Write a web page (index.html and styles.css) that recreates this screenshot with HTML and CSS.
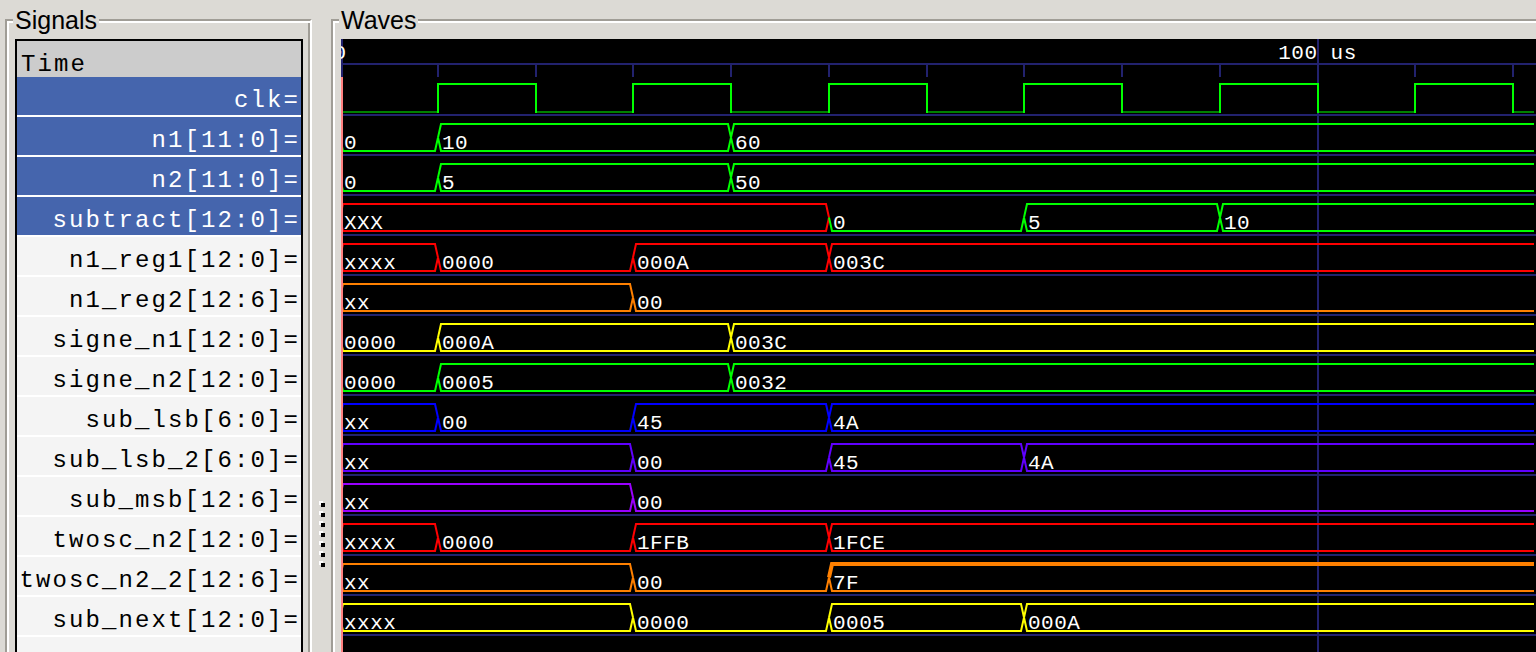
FILE: index.html
```html
<!DOCTYPE html>
<html>
<head>
<meta charset="utf-8">
<title>Waves</title>
<link rel="stylesheet" href="styles.css">
</head>
<body>
<div class="app">
  <div class="frame signals">
    <span class="frame-label">Signals</span>
    <div class="listbox">
      <div class="list-head">Time</div>
      <div class="row sel"><span class="nm">clk=</span></div>
      <div class="row sel"><span class="nm">n1[11:0]=</span></div>
      <div class="row sel"><span class="nm">n2[11:0]=</span></div>
      <div class="row sel"><span class="nm">subtract[12:0]=</span></div>
      <div class="row"><span class="nm">n1_reg1[12:0]=</span></div>
      <div class="row"><span class="nm">n1_reg2[12:6]=</span></div>
      <div class="row"><span class="nm">signe_n1[12:0]=</span></div>
      <div class="row"><span class="nm">signe_n2[12:0]=</span></div>
      <div class="row"><span class="nm">sub_lsb[6:0]=</span></div>
      <div class="row"><span class="nm">sub_lsb_2[6:0]=</span></div>
      <div class="row"><span class="nm">sub_msb[12:6]=</span></div>
      <div class="row"><span class="nm">twosc_n2[12:0]=</span></div>
      <div class="row"><span class="nm">twosc_n2_2[12:6]=</span></div>
      <div class="row"><span class="nm">sub_next[12:0]=</span></div>
    </div>
  </div>
  <div class="handle">
    <i class="dot"></i><i class="dot"></i><i class="dot"></i><i class="dot"></i><i class="dot"></i><i class="dot"></i><i class="dot"></i>
  </div>
  <div class="frame waves">
    <span class="frame-label">Waves</span>
    <div class="canvas">
      <svg id="wave" class="wave-svg" xmlns="http://www.w3.org/2000/svg" width="1195" height="613" viewBox="341 39 1195 613"></svg>
    </div>
  </div>
</div>
<script src="script.js"></script>
</body>
</html>
```

FILE: styles.css
```css
html, body {
  margin: 0;
  padding: 0;
}
body {
  background: #dcdad5;
  width: 1536px;
  height: 652px;
  overflow: hidden;
  font-family: "Liberation Sans", Arial, sans-serif;
}
.app {
  display: flex;
  align-items: flex-start;
  height: 652px;
  overflow: hidden;
}
.frame {
  position: relative;
  flex: none;
  margin-top: 19px;
  height: 633px;
  box-sizing: border-box;
  border: 2px solid;
  border-bottom: 0;
  border-color: #a09d96 #ffffff #ffffff #a09d96;
  box-shadow: inset 2px 2px 0 #ffffff, inset -2px 0 0 #a09d96;
}
.signals {
  margin-left: 5px;
  width: 307px;
  padding: 18px 7px 0 8px;
}
.waves {
  width: 1205px;
  padding: 18px 0 0 8px;
  border-right: 0;
  box-shadow: inset 2px 2px 0 #ffffff;
}
.frame-label {
  position: absolute;
  top: -15px;
  left: 6px;
  padding: 0 2px;
  background: #dcdad5;
  color: #000;
  font-size: 25px;
  line-height: 29px;
}
.listbox {
  width: 288px;
  height: 613px;
  box-sizing: border-box;
  border: 2px solid #000;
  border-bottom: 0;
  background: #f4f4f4;
  font-family: "Liberation Mono", "Courier New", monospace;
  font-size: 24px;
  letter-spacing: 2.1px;
  color: #000;
  overflow: hidden;
}
.list-head {
  height: 36px;
  box-sizing: border-box;
  padding: 10px 0 0 4px;
  line-height: 27px;
  background: #cccccc;
}
.row {
  display: flex;
  height: 40px;
  box-sizing: border-box;
  border-bottom: 2px solid #ffffff;
  padding-top: 10px;
  line-height: 27px;
  white-space: nowrap;
}
.row.sel {
  background: #4565ad;
  color: #ffffff;
}
.nm {
  flex: none;
  width: 283px;
  text-align: right;
}
.handle {
  flex: none;
  width: 19px;
  box-sizing: border-box;
  padding: 503px 0 0 9px;
  display: flex;
  flex-direction: column;
  gap: 6px;
}
.dot {
  display: block;
  width: 4px;
  height: 4px;
  background: #000;
  box-shadow: -2px -2px 0 #ffffff;
}
.canvas {
  width: 1195px;
  height: 613px;
  background: #000;
  overflow: hidden;
}
.wave-svg {
  display: block;
}
.vt, .rt {
  fill: #ffffff;
  font-family: "Liberation Mono", "Courier New", monospace;
  font-size: 21px;
  letter-spacing: 0.5px;
}
```

FILE: script.js
```js
(function () {
  var NS = 'http://www.w3.org/2000/svg';
  var svg = document.getElementById('wave');
  var NAVY = '#22226e';
  function X(t) { return Math.round(340 + t * 9.775); }
  function el(tag, attrs, text) {
    var e = document.createElementNS(NS, tag);
    for (var k in attrs) e.setAttribute(k, attrs[k]);
    if (text != null) e.textContent = text;
    svg.appendChild(e);
    return e;
  }
  function rect(x, y, w, h, fill) { return el('rect', { x: x, y: y, width: w, height: h, fill: fill }); }

  // ruler
  rect(341, 63, 1195, 2, NAVY);
  rect(341, 39, 2, 38, NAVY);
  for (var k = 1; k <= 12; k++) { if (k !== 10) rect(X(10 * k) - 1, 65, 2, 12, NAVY); }
  // row separators
  for (var r = 0; r < 14; r++) rect(341, 77 + 40 * r + 37, 1195, 2, NAVY);
  // marker at 100 us
  rect(X(100) - 1, 39, 2, 613, NAVY);
  el('text', { x: 340, y: 59, 'class': 'rt', 'text-anchor': 'middle' }, '0');
  el('text', { x: 1317.5, y: 59, 'class': 'rt', 'text-anchor': 'middle' }, '100 us');

  // clock
  var yH = 84, yL = 112;
  for (var c = 0; c < 13; c++) {
    var xs = c === 0 ? 341 : X(10 * c);
    var xe = Math.min(X(10 * (c + 1)), 1534);
    var high = c % 2 === 1;
    el('line', { x1: xs, y1: high ? yH : yL, x2: xe, y2: high ? yH : yL, stroke: high ? '#00ff00' : '#008000', 'stroke-width': 2 });
  }
  for (var e2 = 1; e2 <= 12; e2++) {
    var xx = X(10 * e2);
    el('line', { x1: xx, y1: yH - 1, x2: xx, y2: yL + 1, stroke: '#00ff00', 'stroke-width': 2 });
  }

  var G = '#00ff00', R = '#ff0000', O = '#ff8000', Y = '#ffff00';
  var rows = [
    null,
    { c: G, s: [[0, '0'], [10, '10'], [40, '60']] },
    { c: G, s: [[0, '0'], [10, '5'], [40, '50']] },
    { c: G, s: [[0, 'XXX', R], [50, '0'], [70, '5'], [90, '10']] },
    { c: R, s: [[0, 'xxxx'], [10, '0000'], [30, '000A'], [50, '003C']] },
    { c: O, s: [[0, 'xx'], [30, '00']] },
    { c: Y, s: [[0, '0000'], [10, '000A'], [40, '003C']] },
    { c: G, s: [[0, '0000'], [10, '0005'], [40, '0032']] },
    { c: '#0000ff', s: [[0, 'xx'], [10, '00'], [30, '45'], [50, '4A']] },
    { c: '#6000ff', s: [[0, 'xx'], [30, '00'], [50, '45'], [70, '4A']] },
    { c: '#9900ff', s: [[0, 'xx'], [30, '00']] },
    { c: R, s: [[0, 'xxxx'], [10, '0000'], [30, '1FFB'], [50, '1FCE']] },
    { c: O, s: [[0, 'xx'], [30, '00'], [50, '7F', null, 4]] },
    { c: Y, s: [[0, 'xxxx'], [30, '0000'], [50, '0005'], [70, '000A']] }
  ];

  rows.forEach(function (row, k) {
    if (!row) return;
    var top = 77 + 40 * k, yT = top + 7, yB = top + 34, yM = top + 20.5;
    row.s.forEach(function (seg, i) {
      var t = seg[0], v = seg[1], col = seg[2] || row.c, tw = seg[3] || 2;
      var xs = X(t);
      var last = i === row.s.length - 1;
      var xe = last ? 1534 : X(row.s[i + 1][0]);
      var zero = /^0+$/.test(v);
      var endB = last ? ('L' + xe + ',' + yB) : ('L' + (xe - 3) + ',' + yB + ' L' + xe + ',' + yM);
      el('path', { d: 'M' + xs + ',' + yM + ' L' + (xs + 3) + ',' + yB + ' ' + endB, stroke: col, 'stroke-width': 2, fill: 'none' });
      if (!zero) {
        var endT = last ? ('L' + xe + ',' + yT) : ('L' + (xe - 3) + ',' + yT + ' L' + xe + ',' + yM);
        el('path', { d: 'M' + xs + ',' + yM + ' L' + (xs + 3) + ',' + yT + ' ' + endT, stroke: col, 'stroke-width': tw, fill: 'none' });
      }
      el('text', { x: xs + 4, y: top + 32, 'class': 'vt' }, v);
    });
  });

  // left edge line
  rect(341, 77, 2, 575, '#ff8080');
})();
```
